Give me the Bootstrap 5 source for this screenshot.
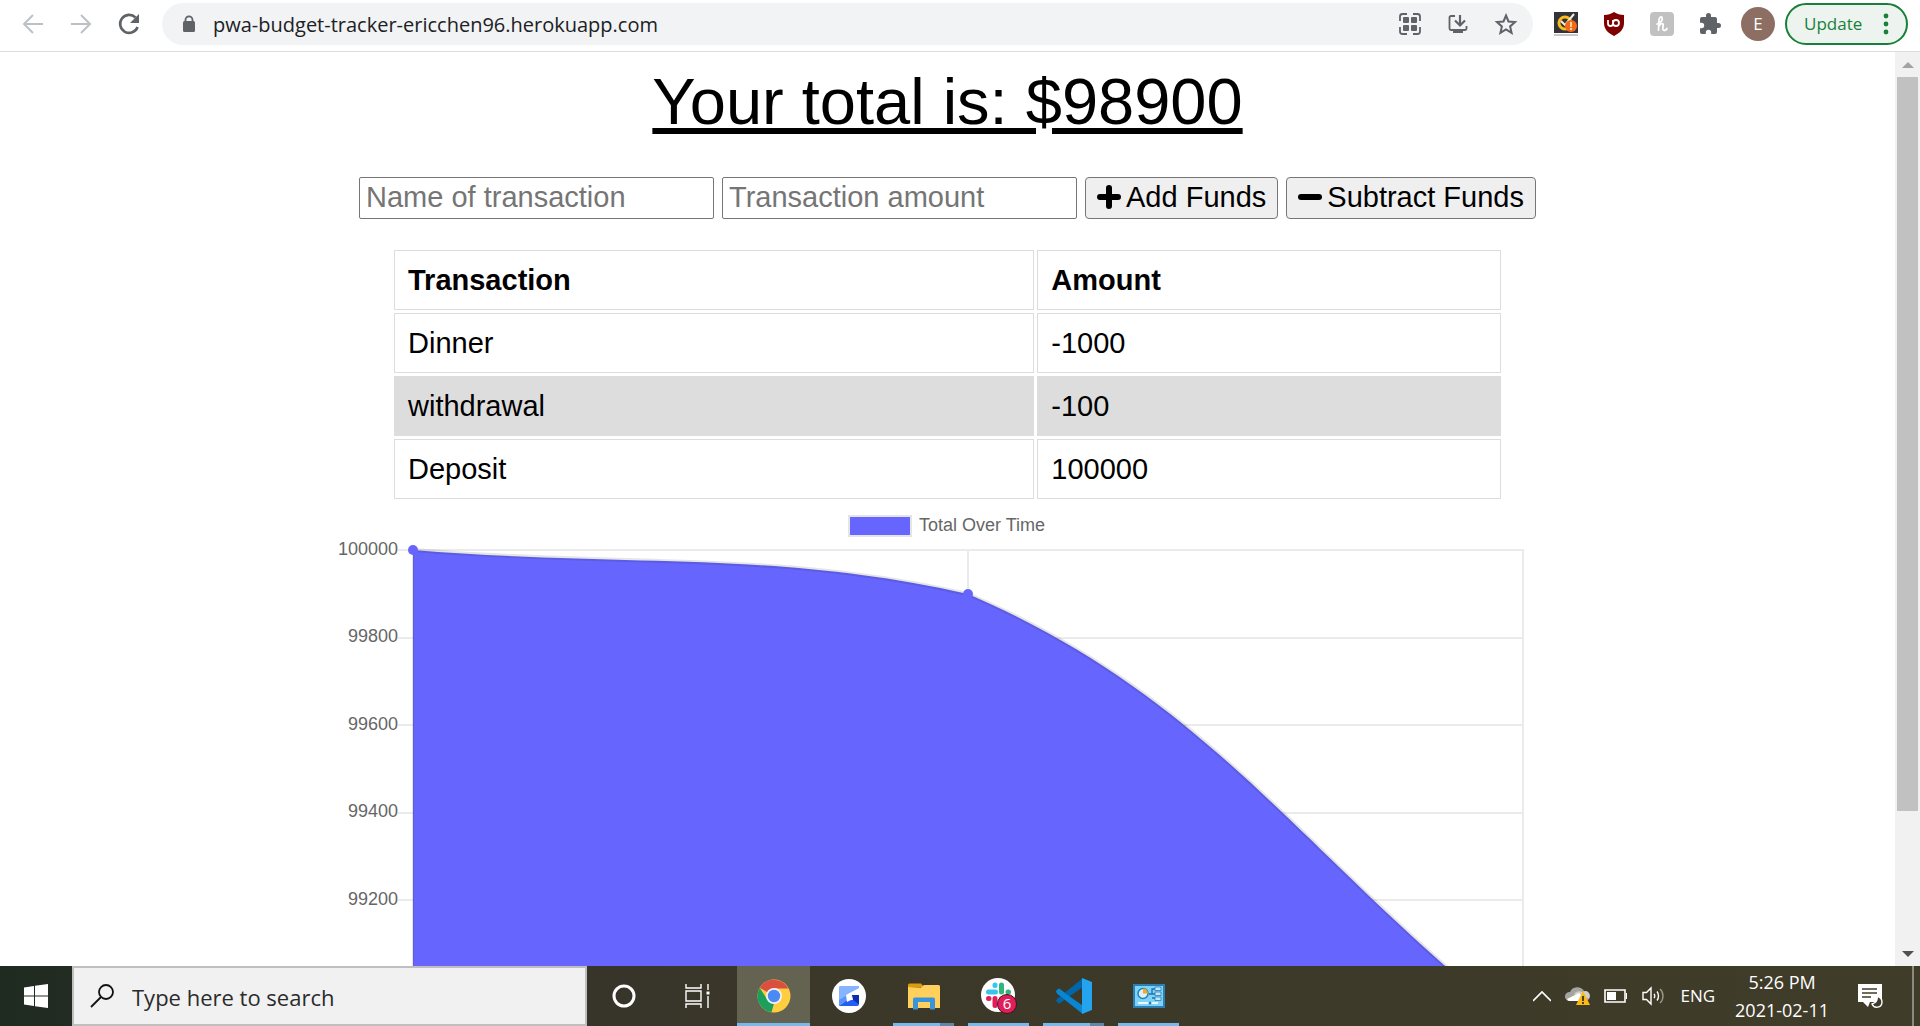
<!DOCTYPE html>
<html lang="en">
<head>
<meta charset="utf-8">
<meta name="viewport" content="width=device-width, initial-scale=1">
<title>Budget Tracker</title>
<link href="https://cdn.jsdelivr.net/npm/bootstrap@5.3.0/dist/css/bootstrap.min.css" rel="stylesheet">
<style>
  :root { --ui-font: "Open Sans", "Noto Sans", sans-serif; --page-font: "Liberation Sans", Arial, sans-serif; }
  body { font-family: var(--page-font); color: #000; background: #fff; }
  svg { display: block; flex: none; }
  button { font-family: inherit; }
  .plain-btn { border: 0; background: none; padding: 0; }

  /* browser toolbar */
  .toolbar { height: 52px; padding: 3px 12px 6px 21px; border-bottom: 1px solid #dcdde0; font-family: var(--ui-font); }
  .nav-tools { gap: 24px; width: 141px; }
  .omnibox { height: 42px; border-radius: 21px; background: #f1f3f4; padding: 0 15px 0 20px; }
  .omnibox-url { border: 0; outline: 0; background: none; color: #202124; font-size: 20px; line-height: 28px; padding: 2px 0 0; margin-left: 17px; min-width: 0; }
  .omnibox-tools { gap: 24px; }
  .ext-tools { padding: 0 10px 0 21px; gap: 19px; }
  .ext-icons { gap: 24px; }
  .avatar { width: 34px; height: 34px; background: #8d6e63; color: #fff; font-size: 17px; line-height: 34px; }
  .update-btn { width: 123px; height: 42px; border: 2px solid #188038; border-radius: 21px; background: #edf3ef; color: #188038; font-size: 17px; padding: 0 17px; }

  /* page */
  .page-title { font-size: 65px; line-height: 74px; margin: 13px 0 38px; text-decoration: underline; text-decoration-thickness: 6px; text-underline-offset: 4px; }
  .entry-row { gap: 8px; margin-bottom: 28px; font-size: 29px; line-height: 34px; }
  .entry-input { width: 355px; height: 42px; border: 1px solid #767676; border-radius: 2px; padding: 0 6px 1px; line-height: 34px; }
  .entry-input::placeholder { color: #757575; opacity: 1; }
  .entry-btn { height: 42px; border: 1px solid #767676; border-radius: 4px; background: #efefef; padding: 0 11px 3px; gap: 5px; white-space: nowrap; color: #000; }
  .tracker { max-width: 1225px; }
  .ledger { width: 100%; max-width: 1113px; border-collapse: separate; border-spacing: 3px; font-size: 29px; line-height: 34px; }
  .ledger th, .ledger td { height: 60px; padding: 0 13px; border: 1px solid #ddd; }
  .ledger tbody tr:nth-child(even) td { background: #ddd; }
  .chart text { font-size: 18px; fill: #666; font-family: var(--page-font); }

  /* scroll bar */
  .scroll-rail { width: 25px; background: #f1f1f1; }
  .scroll-step { height: 25px; }
  .scroll-thumb { background: #c1c1c1; margin: 0 2px; height: 85%; }

  /* taskbar */
  .taskbar { height: 60px; background: linear-gradient(90deg, #1f2a20 0, #222c22 4%, #37342a 31%, #3c3829 45%, #3f3c29 100%); font-family: var(--ui-font); color: #fff; }
  .start-btn { width: 72px; }
  .search-box { width: 515px; border: 2px solid #bfbfbf; background: #f1f1f1; padding-left: 16px; }
  .search-field { border: 0; outline: 0; background: none; font-size: 22px; line-height: 30px; padding: 2px 0 0; margin-left: 18px; min-width: 0; }
  .search-field::placeholder { color: #2b2b2b; opacity: 1; }
  .apps { gap: 2px; }
  .app-btn { width: 73px; height: 60px; }
  .app-btn.current { background: #646251; border-bottom: 3px solid #76b9ed; padding-top: 3px; }
  .run-bar { left: 6px; right: 6px; bottom: 0; height: 3px; background: #76b9ed; }
  .run-bar.stacked { background: linear-gradient(90deg, #76b9ed 0 47px, #5f87a6 47px); }
  .tray { font-size: 17px; line-height: 28px; padding-right: 6px; }
  .tray-icons { gap: 14px; margin-right: 20px; }
  .clock { font-size: 18px; margin-right: 28px; }
  .peek { width: 2px; background: #8b8a7e; margin-left: 29px; }
</style>
</head>
<body class="vh-100 d-flex flex-column overflow-hidden">

<header class="toolbar d-flex align-items-center flex-shrink-0">
  <div class="nav-tools d-flex align-items-center flex-shrink-0">
    <button class="plain-btn" aria-label="Back"><svg width="24" height="24" viewBox="0 0 24 24" fill="none" stroke="#bdc1c6" stroke-width="2"><path d="M22 12H3M12 3L3 12l9 9"/></svg></button>
    <button class="plain-btn" aria-label="Forward"><svg width="24" height="24" viewBox="0 0 24 24" fill="none" stroke="#bdc1c6" stroke-width="2"><path d="M2 12h19M12 3l9 9-9 9"/></svg></button>
    <button class="plain-btn" aria-label="Reload"><svg width="24" height="24" viewBox="0 0 24 24"><path d="M18.500 5.500A9 9 0 1 0 20.600 15" fill="none" stroke="#5f6368" stroke-width="2.600"/><path d="M22 2v9h-9z" fill="#5f6368"/></svg></button>
  </div>
  <div class="omnibox d-flex align-items-center flex-grow-1">
    <svg width="14" height="18" viewBox="0 0 14 18"><path d="M3.500 7V4.800a3.500 3.500 0 0 1 7 0V7" fill="none" stroke="#5f6368" stroke-width="1.800"/><rect x="1" y="6" width="12" height="11" rx="1.500" fill="#5f6368"/></svg>
    <input class="omnibox-url flex-grow-1" type="text" aria-label="Address" value="pwa-budget-tracker-ericchen96.herokuapp.com">
    <div class="omnibox-tools d-flex align-items-center">
      <button class="plain-btn" aria-label="QR code"><svg width="24" height="24" viewBox="0 0 24 24"><path d="M2 9V4.500A2.500 2.500 0 0 1 4.500 2H9M15 2h4.500A2.500 2.500 0 0 1 22 4.500V9M22 15v4.500a2.500 2.500 0 0 1-2.500 2.500H15M9 22H4.500A2.500 2.500 0 0 1 2 19.500V15" fill="none" stroke="#5f6368" stroke-width="1.800"/><g fill="#5f6368"><rect x="5" y="5" width="6" height="6" rx="1"/><rect x="13" y="5" width="6" height="6" rx="1"/><rect x="5" y="13" width="6" height="6" rx="1"/><rect x="13" y="13" width="6" height="6" rx="1"/></g></svg></button>
      <button class="plain-btn" aria-label="Install app"><svg width="24" height="24" viewBox="0 0 24 24"><path d="M9 4H5a1.500 1.500 0 0 0-1.500 1.500v11A1.500 1.500 0 0 0 5 18h14a1.500 1.500 0 0 0 1.500-1.500V14" fill="none" stroke="#5f6368" stroke-width="1.800"/><path d="M14 3v10M9 8.500l5 5 5-5" fill="none" stroke="#5f6368" stroke-width="2.200"/><path d="M7 18h10v3H7z" fill="#5f6368"/></svg></button>
      <button class="plain-btn" aria-label="Bookmark"><svg width="24" height="24" viewBox="0 0 24 24"><path d="M12 3.500l2.500 6 6.500.6-4.900 4.300 1.500 6.400L12 17.400l-5.600 3.400 1.500-6.400L3 10.100l6.500-.6z" fill="none" stroke="#5f6368" stroke-width="2"/></svg></button>
    </div>
  </div>
  <div class="ext-tools d-flex align-items-center flex-shrink-0">
    <div class="ext-icons d-flex align-items-center">
      <button class="plain-btn" aria-label="Norton"><svg width="24" height="24" viewBox="0 0 24 24"><path fill="#33343a" d="M0 0h24v21H0z"/><path fill="#c9c9cb" d="M0 22h24v2H0z"/><circle cx="11" cy="11" r="6" fill="none" stroke="#fdbb1e" stroke-width="3"/><path d="M7 9l4 4L20 2" fill="none" stroke="#f4f0e0" stroke-width="2"/><circle cx="17" cy="14" r="6" fill="#f26a16"/><path d="M17 10v5M17 16v2" stroke="#ffd9b8" stroke-width="1.800"/></svg></button>
      <button class="plain-btn" aria-label="uBlock Origin"><svg width="24" height="24" viewBox="0 0 24 24"><path d="M12 0c3 2 6 3 10 3v8c0 6-4 10-10 13C6 21 2 17 2 11V3c4 0 7-1 10-3z" fill="#800000"/><path d="M6 8v3.500a2.500 2.500 0 0 0 5 0V8M11 11a3 3 0 1 0 6 0 3 3 0 1 0-6 0" fill="none" stroke="#fff" stroke-width="1.800"/></svg></button>
      <button class="plain-btn" aria-label="Honey"><svg width="24" height="24" viewBox="0 0 24 24"><rect width="24" height="24" rx="4" fill="#c1c1c1"/><path d="M7 12c4-1 6-4 5-6.500-1-1.500-3 0-3 3L8.500 18M9 14c1-2 3-3 4-2s-1 4 0 5.500 3 1 4-1" fill="none" stroke="#fff" stroke-width="1.800" stroke-linecap="round"/></svg></button>
      <button class="plain-btn" aria-label="Extensions"><svg width="24" height="24" viewBox="0 0 24 24"><path d="M20.500 11H19V7a2 2 0 0 0-2-2h-4V3.500a2.500 2.500 0 0 0-5 0V5H4a2 2 0 0 0-2 2v3.800h1.500a2.700 2.700 0 0 1 0 5.400H2V20a2 2 0 0 0 2 2h3.800v-1.500a2.700 2.700 0 0 1 5.400 0V22H17a2 2 0 0 0 2-2v-4h1.500a2.500 2.500 0 0 0 0-5z" fill="#5f6368"/></svg></button>
    </div>
    <button class="plain-btn avatar rounded-circle text-center" aria-label="Profile">E</button>
  </div>
  <button class="update-btn d-flex align-items-center justify-content-between flex-shrink-0"><span>Update</span>
    <svg width="6" height="22" viewBox="0 0 6 22" fill="#188038"><circle cx="3" cy="3" r="2.400"/><circle cx="3" cy="11" r="2.400"/><circle cx="3" cy="19" r="2.400"/></svg>
  </button>
</header>

<div class="d-flex flex-grow-1 overflow-hidden">
  <main class="flex-grow-1 overflow-hidden">
    <h1 class="page-title text-center fw-normal">Your total is: $98900</h1>
    <form class="entry-row d-flex flex-wrap justify-content-center">
      <input class="entry-input" type="text" placeholder="Name of transaction" aria-label="Name of transaction">
      <input class="entry-input" type="number" placeholder="Transaction amount" aria-label="Transaction amount">
      <button class="entry-btn d-flex align-items-center" type="button"><svg width="24" height="24" viewBox="0 0 24 24"><path d="M12 3v18M3 12h18" stroke="#000" stroke-width="6" stroke-linecap="round"/></svg>Add Funds</button>
      <button class="entry-btn d-flex align-items-center" type="button"><svg width="24" height="24" viewBox="0 0 24 24"><path d="M3 12h18" stroke="#000" stroke-width="6" stroke-linecap="round"/></svg>Subtract Funds</button>
    </form>
    <div class="tracker mx-auto">
      <table class="ledger mx-auto">
        <colgroup><col style="width:58%"><col style="width:42%"></colgroup>
        <thead><tr><th scope="col">Transaction</th><th scope="col">Amount</th></tr></thead>
        <tbody>
          <tr><td>Dinner</td><td>-1000</td></tr>
          <tr><td>withdrawal</td><td>-100</td></tr>
          <tr><td>Deposit</td><td>100000</td></tr>
        </tbody>
      </table>
      <svg class="chart w-100" viewBox="0 0 1225 560" role="img" aria-label="Total Over Time">
        <path d="M63 48H1189M63 136H1189M63 223H1189M63 311H1189M63 398H1189M63 486H1189M633 48V560M1188 48V560" stroke="#000" stroke-opacity=".08" stroke-width="2"/>
        <path d="M78 48C300 66 437 48 633 92C881 199 966 354 1188 529V560H78z" fill="#66f"/>
        <path d="M78 48C300 66 437 48 633 92C881 199 966 354 1188 529" fill="none" stroke="#000" stroke-opacity=".1" stroke-width="4"/>
        <path d="M78 48V560" stroke="#000" stroke-opacity=".2" stroke-width="1"/>
        <circle cx="78" cy="48" r="5" fill="#66f"/><circle cx="633" cy="92" r="5" fill="#66f"/>
        <rect x="514" y="14" width="62" height="20" fill="#66f" stroke="#e5e5e5" stroke-width="2"/>
        <text x="584" y="29">Total Over Time</text>
        <g text-anchor="end"><text x="63" y="53">100000</text><text x="63" y="140">99800</text><text x="63" y="228">99600</text><text x="63" y="315">99400</text><text x="63" y="403">99200</text></g>
      </svg>
    </div>
  </main>
  <div class="scroll-rail d-flex flex-column flex-shrink-0">
    <button class="plain-btn scroll-step d-flex align-items-center justify-content-center" aria-label="Scroll up"><svg width="12" height="6" viewBox="0 0 12 6"><path d="M0 6l6-6 6 6z" fill="#a3a3a3"/></svg></button>
    <div class="flex-grow-1"><div class="scroll-thumb"></div></div>
    <button class="plain-btn scroll-step d-flex align-items-center justify-content-center" aria-label="Scroll down"><svg width="12" height="6" viewBox="0 0 12 6"><path d="M0 0l6 6 6-6z" fill="#505050"/></svg></button>
  </div>
</div>

<footer class="taskbar d-flex flex-shrink-0">
  <button class="plain-btn start-btn d-flex align-items-center justify-content-center" aria-label="Start"><svg width="24" height="24" viewBox="0 0 24 24" fill="#fff"><path d="M0 3.500L10 2v9.500H0zM11 1.800L24 0v11.500H11zM0 12.500h10V22L0 20.500zM11 12.500h13V24l-13-1.800z"/></svg></button>
  <div class="search-box d-flex align-items-center">
    <svg width="24" height="24" viewBox="0 0 24 24" fill="none" stroke="#111" stroke-width="1.800"><circle cx="16" cy="8" r="7"/><path d="M11 13L1 23"/></svg>
    <input class="search-field flex-grow-1" type="text" placeholder="Type here to search" aria-label="Type here to search">
  </div>
  <div class="apps d-flex">
    <button class="plain-btn app-btn d-flex align-items-center justify-content-center" aria-label="Cortana"><svg width="26" height="26" viewBox="0 0 26 26"><circle cx="13" cy="13" r="10" fill="none" stroke="#fff" stroke-width="3"/></svg></button>
    <button class="plain-btn app-btn d-flex align-items-center justify-content-center" aria-label="Task view"><svg width="28" height="24" viewBox="0 0 28 24" fill="none" stroke="#fff" stroke-width="1.400"><path d="M1 0v4h15V0M1 24v-4h15v4M1 7h15v10H1zM23 0v6M23 12v12"/><path d="M21.500 7.500h3v3h-3z" fill="#fff" stroke="none"/></svg></button>
    <button class="plain-btn app-btn current d-flex align-items-center justify-content-center" aria-label="Chrome"><svg width="34" height="34" viewBox="0 0 34 34"><circle cx="17" cy="17" r="16.500" fill="#ffcd40"/><path d="M17 17L2.700 8.700A16.500 16.500 0 0 1 31.300 9.500H17z" fill="#db4f3f"/><path d="M2.700 8.700L10.500 21l6.500 3.500-2.500 8.800A16.500 16.500 0 0 1 2.700 8.700z" fill="#1a9f5c"/><circle cx="17" cy="17" r="8" fill="#f1f1f1"/><circle cx="17" cy="17" r="6.200" fill="#4a8af4"/></svg></button>
    <button class="plain-btn app-btn d-flex align-items-center justify-content-center" aria-label="GoodSync"><svg width="34" height="34" viewBox="0 0 34 34"><circle cx="17" cy="17" r="17" fill="#fff"/><path d="M9 7h18v5l-12 9-8 6V9a2 2 0 0 1 2-2z" fill="#5a93fb"/><path d="M9 7h18v2L7 21V9a2 2 0 0 1 2-2z" fill="#86b4ff"/><path d="M7 27l8-6h12v4a2 2 0 0 1-2 2z" fill="#2160f5"/><path d="M20 16h7v9l-6-4z" fill="#0b2fb0"/><path d="M27 9L14 16l1 7 4-2 1-5h7z" fill="#fff"/></svg></button>
    <button class="plain-btn app-btn position-relative d-flex align-items-center justify-content-center" aria-label="File Explorer"><svg width="34" height="28" viewBox="0 0 34 28"><path d="M1 3a1.500 1.500 0 0 1 1.500-1.500H14L17 5H1z" fill="#e09c06"/><path d="M1 5l13 .5L17 3h14.500A1.500 1.500 0 0 1 33 4.500V26H1z" fill="#ffd15c"/><path d="M6 27.500V17a1.500 1.500 0 0 1 1.500-1.500h19A1.500 1.500 0 0 1 28 17v10.500h-5V20H11v7.500z" fill="#3a94dc"/></svg><span class="run-bar stacked position-absolute"></span></button>
    <button class="plain-btn app-btn position-relative d-flex align-items-center justify-content-center" aria-label="Slack, 6 notifications"><svg width="38" height="38" viewBox="0 0 38 38"><circle cx="18" cy="18" r="17" fill="#fff"/><g stroke-width="5" stroke-linecap="round"><path d="M8.500 15h7M15 8v.500" stroke="#36c5f0"/><path d="M21.500 8v7M28 15h.500" stroke="#2eb67d"/><path d="M21.500 21.500h7" stroke="#ecb22e"/><path d="M15 21.500v7M8.500 21.500h.500" stroke="#e01e5a"/></g><circle cx="27" cy="27" r="9.500" fill="#e01e5a" stroke="#4a0d1f"/><text x="27" y="32" text-anchor="middle" font-size="15" fill="#fff">6</text></svg><span class="run-bar position-absolute"></span></button>
    <button class="plain-btn app-btn position-relative d-flex align-items-center justify-content-center" aria-label="Visual Studio Code"><svg width="36" height="36" viewBox="0 0 36 36"><path d="M0 13l3-2.500L27 28v8L1 15.500z" fill="#0079cc"/><path d="M0 23l3 2.700L27 9V0L1 21z" fill="#0065a9"/><path d="M0 13l3-2.500 12 9.300L27 28v8L1 15.500z" fill="#0a85d0"/><path d="M26 0l10 4v28l-10 4z" fill="#24a3ee"/></svg><span class="run-bar stacked position-absolute"></span></button>
    <button class="plain-btn app-btn position-relative d-flex align-items-center justify-content-center" aria-label="Control Panel"><svg width="32" height="24" viewBox="0 0 32 24"><path d="M1 1h30v22H1z" fill="#7fd2f8" stroke="#2a7fb5" stroke-width="2"/><circle cx="10" cy="9.500" r="5" fill="#d9f1fd" stroke="#247fb8" stroke-width="1.500"/><path d="M10 9.500v-5a5 5 0 0 1 5 5z" fill="#f7a823"/><path d="M16 10h3V5h3M19 10h3M19 14h3" fill="none" stroke="#1d73aa" stroke-width="1.300"/><g fill="#bfe6fa" stroke="#2a7fb5" stroke-width=".8"><path d="M22 3h6v3.500h-6zM22 8h6v3.500h-6zM22 13h6v3.500h-6z"/></g><path d="M5 19h20" stroke="#e9f7fe" stroke-width="2"/><circle cx="17" cy="19" r="1.500" fill="#2a7fb5"/></svg><span class="run-bar position-absolute"></span></button>
  </div>
  <div class="tray d-flex ms-auto">
    <div class="tray-icons d-flex align-items-center">
      <svg width="18" height="12" viewBox="0 0 18 12" fill="none" stroke="#fff" stroke-width="1.600"><path d="M0 11L9 2l9 9"/></svg>
      <svg width="25" height="24" viewBox="0 0 25 24"><path d="M4 17a4.500 4.500 0 0 1 1-9 8 8 0 0 1 14-1 5 5 0 0 1 2 10z" fill="#a5a5a0"/><path d="M9 10a6 6 0 0 1 8-2l4-1a5 5 0 0 1 3 7l-6 1z" fill="#cfcfcc"/><path d="M4 17a4.500 4.500 0 0 1-2-2l12-6 8 8z" fill="#fff"/><path d="M18 7l7 14H11z" fill="#fdb913"/><path d="M18 12v5M18 18v2" stroke="#222" stroke-width="1.600"/></svg>
      <svg width="24" height="16" viewBox="0 0 24 16"><path d="M1 2h20v12H1z" fill="none" stroke="#fff" stroke-width="1.600"/><path d="M3 4h9v8H3zM22 5h1v6h-1z" fill="#fff"/></svg>
      <svg width="24" height="20" viewBox="0 0 24 20" fill="none" stroke="#fff" stroke-width="1.400"><path d="M1 6.500h3.500L9 2v16l-4.500-4.500H1zM12 8c1 1 1 3 0 4M15 5.500c2 2.500 2 6.500 0 9"/><path d="M18 3c4 3.500 4 10.500 0 14" stroke="#99978a"/></svg>
      <span>ENG</span>
    </div>
    <div class="clock text-center d-flex flex-column justify-content-center"><span>5:26 PM</span><span>2021-02-11</span></div>
    <button class="plain-btn d-flex align-items-center" aria-label="Notifications"><svg width="26" height="24" viewBox="0 0 26 24"><path d="M1 0h24v18H13l-2 5-5-5H1z" fill="#fff"/><path d="M5 5h15M5 9h15M5 13h9" stroke="#3f3c29" stroke-width="1.500"/><path d="M20 12c1 5-1 7-5 8 2 5 10 4 10-2 0-3-2-5-5-6z" fill="#3f3c29" stroke="#fff" stroke-width="1.400"/></svg></button>
    <span class="peek"></span>
  </div>
</footer>

<script src="https://cdn.jsdelivr.net/npm/bootstrap@5.3.0/dist/js/bootstrap.bundle.min.js"></script>
</body>
</html>
